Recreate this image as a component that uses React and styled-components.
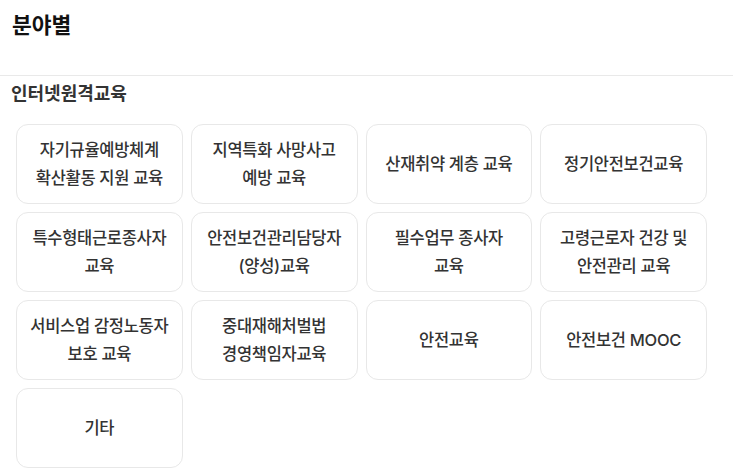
import React from "react";
import styled, { createGlobalStyle } from "styled-components";

const GlobalStyle = createGlobalStyle`
  body {
    margin: 0;
    background: #fff;
    font-family: Inter, "Noto Sans CJK KR", "Noto Sans", sans-serif;
  }
`;

const items = [
  ["자기규율예방체계", "확산활동 지원 교육"],
  ["지역특화 사망사고", "예방 교육"],
  ["산재취약 계층 교육"],
  ["정기안전보건교육"],
  ["특수형태근로종사자", "교육"],
  ["안전보건관리담당자", "(양성)교육"],
  ["필수업무 종사자", "교육"],
  ["고령근로자 건강 및", "안전관리 교육"],
  ["서비스업 감정노동자", "보호 교육"],
  ["중대재해처벌법", "경영책임자교육"],
  ["안전교육"],
  ["안전보건 MOOC"],
  ["기타"],
];

const App = () => {
  return (
    <Page>
      <GlobalStyle />
      <Header>
        <Title>분야별</Title>
      </Header>
      <Section>
        <SubTitle>인터넷원격교육</SubTitle>
        <Grid>
          {items.map((lines, i) => (
            <Card key={i}>
              {lines.map((l, j) => (
                <span key={j}>{l}</span>
              ))}
            </Card>
          ))}
        </Grid>
      </Section>
    </Page>
  );
};

const Page = styled.div`
  width: 733px;
  color: #333;
`;

const Header = styled.div`
  height: 76px;
  border-bottom: 1px solid #e9e9e9;
  padding: 10px 12px 0;
  box-sizing: border-box;
`;

const Title = styled.h1`
  margin: 0;
  font-size: 21.5px;
  font-weight: 700;
  color: #111;
  line-height: 30px;
`;

const Section = styled.div`
  padding: 4px 26px 0 16px;
`;

const SubTitle = styled.h2`
  margin: 0 0 0 -5px;
  font-size: 18px;
  font-weight: 600;
  color: #333;
  line-height: 28px;
`;

const Grid = styled.div`
  display: grid;
  grid-template-columns: repeat(4, 1fr);
  gap: 8px;
  margin-top: 16px;
`;

const Card = styled.div`
  height: 80px;
  box-sizing: border-box;
  border: 1px solid #e8e8e8;
  border-radius: 12px;
  display: flex;
  flex-direction: column;
  align-items: center;
  justify-content: center;
  font-size: 16.5px;
  font-weight: 500;
  line-height: 28px;
  color: #333;
  text-align: center;
  letter-spacing: -0.3px;
`;

export default App;
